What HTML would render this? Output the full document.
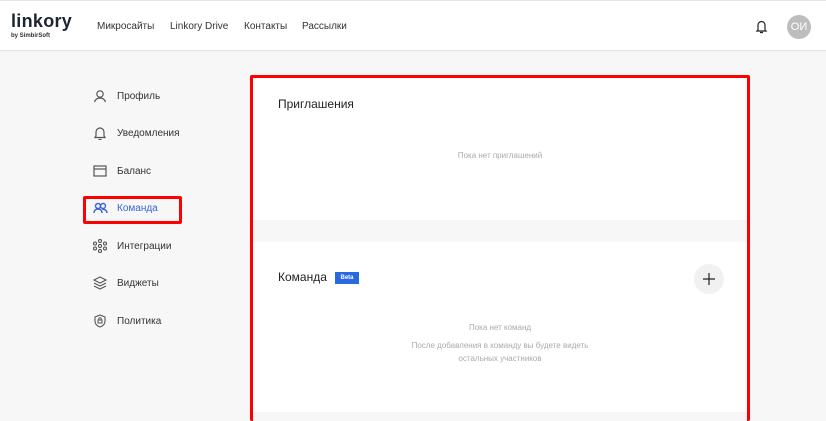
<!DOCTYPE html>
<html><head><meta charset="utf-8"><style>
*{margin:0;padding:0;box-sizing:border-box}
body{width:826px;height:421px;overflow:hidden;background:#f7f7f7;font-family:"Liberation Sans",sans-serif;position:relative;color:#222}
.hdr{position:absolute;left:0;top:0;width:826px;height:51px;background:#fff;border-top:1px solid #e6e6e6;border-bottom:1px solid #e2e2e2}
.logo{position:absolute;left:11px;top:10px;font-size:18px;color:#1d2433;font-weight:bold;letter-spacing:0.3px}
.logo2{position:absolute;left:11px;top:32px;font-size:6px;color:#333;font-weight:bold}
.nav{position:absolute;top:20px;font-size:10px;color:#333}
.av{position:absolute;left:787px;top:14px;width:24px;height:24px;border-radius:50%;background:#bdbdbd;color:#fff;font-size:11px;text-align:center;line-height:24px}
.side{position:absolute;left:93px;font-size:10px;color:#333}
.side svg{position:absolute;left:0;top:-2px}
.side span{position:absolute;left:24px;top:0;white-space:nowrap}
.card{position:absolute;left:250px;top:75px;width:500px;height:346px;background:#f7f7f7;border:3px solid #f00;border-bottom:none;border-radius:2px}
.w{position:absolute;background:#fff;left:0;width:494px}
.t{position:absolute;font-size:12px;color:#222}
.g{position:absolute;font-size:8px;color:#aaa;text-align:center;width:494px;line-height:13px}
</style></head><body>
<div class="hdr">
<div class="logo">linkory</div><div class="logo2">by SimbirSoft</div>
<div class="nav" style="left:97px">Микросайты</div>
<div class="nav" style="left:170px">Linkory Drive</div>
<div class="nav" style="left:244px">Контакты</div>
<div class="nav" style="left:302px">Рассылки</div>
<svg style="position:absolute;left:755px;top:18px" width="13" height="15" viewBox="0 0 13 15"><path d="M3 11V6a3.5 3.5 0 0 1 7 0v5l1 1H2z M5 13.5h3" fill="none" stroke="#222" stroke-width="1.2"/></svg>
<div class="av">ОИ</div>
</div>

<div class="side" style="top:91px"><svg width="14" height="14" viewBox="0 0 14 14"><circle cx="7" cy="5" r="3.2" fill="none" stroke="#555" stroke-width="1.2"/><path d="M1.5 13c1-3 3-4 5.5-4s4.5 1 5.5 4" fill="none" stroke="#555" stroke-width="1.2"/></svg><span>Профиль</span></div>
<div class="side" style="top:128px"><svg width="14" height="14" viewBox="0 0 14 14"><path d="M3 10V6a4 4 0 0 1 8 0v4l1 1.5H2z M5.5 13.5h3" fill="none" stroke="#555" stroke-width="1.2"/></svg><span>Уведомления</span></div>
<div class="side" style="top:166px"><svg width="14" height="14" viewBox="0 0 14 14"><rect x="1" y="2" width="12" height="10" fill="none" stroke="#555" stroke-width="1.2"/><path d="M1 5h12" stroke="#555" stroke-width="1.2"/></svg><span>Баланс</span></div>
<div style="position:absolute;left:83px;top:196px;width:99px;height:28px;border:3px solid #f00;border-radius:2px"></div>
<div class="side" style="top:203px;color:#3a63d8"><svg width="15" height="14" viewBox="0 0 15 14"><circle cx="5" cy="5" r="2.5" fill="none" stroke="#3a63d8" stroke-width="1.4"/><circle cx="10" cy="5" r="2.5" fill="none" stroke="#3a63d8" stroke-width="1.4"/><path d="M1 12c0-3 2-4 4-4s4 1 4 4M9 8c2 0 5 1 5 4" fill="none" stroke="#3a63d8" stroke-width="1.4"/></svg><span>Команда</span></div>
<div class="side" style="top:241px"><svg width="14" height="14" viewBox="0 0 14 14"><g fill="none" stroke="#555" stroke-width="1.1"><circle cx="7" cy="7" r="1.6"/><circle cx="7" cy="2" r="1.5"/><circle cx="7" cy="12" r="1.5"/><circle cx="2" cy="4.5" r="1.5"/><circle cx="12" cy="4.5" r="1.5"/><circle cx="2" cy="9.5" r="1.5"/><circle cx="12" cy="9.5" r="1.5"/></g></svg><span>Интеграции</span></div>
<div class="side" style="top:278px"><svg width="14" height="14" viewBox="0 0 14 14"><path d="M7 1l6 3-6 3-6-3z M1 7l6 3 6-3 M1 10l6 3 6-3" fill="none" stroke="#555" stroke-width="1.1"/></svg><span>Виджеты</span></div>
<div class="side" style="top:316px"><svg width="14" height="14" viewBox="0 0 14 14"><path d="M7 1l5 2v4c0 3-2 5-5 6-3-1-5-3-5-6V3z" fill="none" stroke="#555" stroke-width="1.1"/><rect x="5" y="6" width="4" height="3" fill="none" stroke="#555" stroke-width="1"/><path d="M5.8 6V5a1.2 1.2 0 0 1 2.4 0v1" fill="none" stroke="#555"/></svg><span>Политика</span></div>

<div class="card">
<div class="w" style="top:0;height:142px"></div>
<div class="t" style="left:25px;top:19px">Приглашения</div>
<div class="g" style="top:71px">Пока нет приглашений</div>
<div class="w" style="top:164px;height:170px"></div>
<div class="t" style="left:25px;top:192px">Команда</div>
<div style="position:absolute;left:82px;top:194px;width:24px;height:12px;background:#2868e0;color:#fff;font-size:6px;text-align:center;line-height:12px;font-weight:bold">Beta</div>
<div style="position:absolute;left:441px;top:186px;width:30px;height:30px;border-radius:50%;background:#f1f1f1"></div>
<svg style="position:absolute;left:450px;top:195px" width="12" height="12"><path d="M6 0v12M0 6h12" stroke="#222" stroke-width="1.2"/></svg>
<div class="g" style="top:243px">Пока нет команд</div>
<div class="g" style="top:261px">После добавления в команду вы будете видеть<br>остальных участников</div>
</div>
</body></html>
